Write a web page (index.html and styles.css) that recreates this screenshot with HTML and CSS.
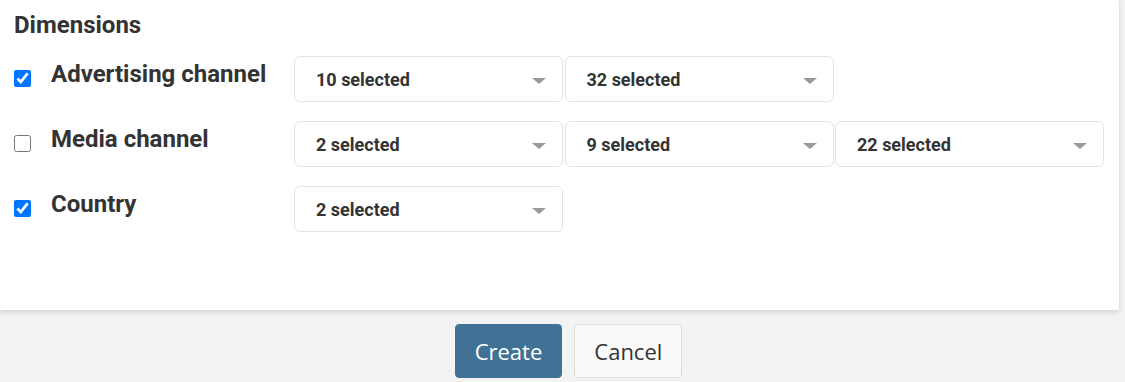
FILE: index.html
```html
<!DOCTYPE html>
<html lang="en">
<head>
<meta charset="UTF-8">
<meta name="viewport" content="width=device-width, initial-scale=1.0">
<title>Dimensions</title>
<link rel="stylesheet" href="styles.css">
</head>
<body>
<div class="panel">
  <h3 class="panel-title">Dimensions</h3>
  <div class="dim-row">
    <input type="checkbox" class="dim-check" checked>
    <label class="dim-label">Advertising channel</label>
    <div class="dim-selects">
      <div class="select-box"><span>10 selected</span><i class="caret"></i></div>
      <div class="select-box"><span>32 selected</span><i class="caret"></i></div>
    </div>
  </div>
  <div class="dim-row">
    <input type="checkbox" class="dim-check">
    <label class="dim-label">Media channel</label>
    <div class="dim-selects">
      <div class="select-box"><span>2 selected</span><i class="caret"></i></div>
      <div class="select-box"><span>9 selected</span><i class="caret"></i></div>
      <div class="select-box"><span>22 selected</span><i class="caret"></i></div>
    </div>
  </div>
  <div class="dim-row">
    <input type="checkbox" class="dim-check" checked>
    <label class="dim-label">Country</label>
    <div class="dim-selects">
      <div class="select-box"><span>2 selected</span><i class="caret"></i></div>
    </div>
  </div>
</div>
<div class="actions">
  <button class="btn btn-primary">Create</button>
  <button class="btn btn-default">Cancel</button>
</div>
</body>
</html>
```

FILE: styles.css
```css
body {
  margin: 0;
  padding: 0;
  background-color: #f3f3f3;
  font-family: Roboto, "Liberation Sans", sans-serif;
  color: #333;
}

.panel {
  width: 1119px;
  height: 310px;
  box-sizing: border-box;
  background-color: #fff;
  box-shadow: 0 2px 5px rgba(0, 0, 0, 0.15);
  padding: 11px 14px;
}

.panel-title {
  margin: 0 0 17px 0;
  font-size: 24px;
  line-height: 28px;
  font-weight: 700;
}

.dim-row {
  display: flex;
  align-items: flex-start;
  height: 46px;
  margin-bottom: 19px;
}

.dim-check {
  width: 17px;
  height: 17px;
  margin: 14px 20px 0 0;
  flex: 0 0 auto;
}

.dim-label {
  width: 243px;
  margin-top: 4px;
  font-size: 24px;
  line-height: 28px;
  font-weight: 700;
  white-space: nowrap;
}

.dim-selects {
  display: flex;
  gap: 1.5px;
}

.select-box {
  width: 269px;
  height: 46px;
  box-sizing: border-box;
  border: 1px solid #e3e3e3;
  border-radius: 6px;
  display: flex;
  align-items: center;
  justify-content: space-between;
  padding: 0 16px 0 21px;
  font-size: 18px;
  font-weight: 700;
}

.caret {
  width: 0;
  height: 0;
  border-left: 7px solid transparent;
  border-right: 7px solid transparent;
  border-top: 6px solid #999;
  margin-top: 4px;
}

.actions {
  display: flex;
  justify-content: center;
  gap: 12px;
  padding: 14px 0 0 12px;
}

.btn {
  font-family: "Open Sans", sans-serif;
  font-size: 22px;
  line-height: 28px;
  padding: 12px 19px;
  border-radius: 4px;
  cursor: pointer;
}

.btn-primary {
  background-color: #3f7294;
  border: 1px solid #3f7294;
  color: #fff;
}

.btn-default {
  background-color: #f9f9f9;
  border: 1px solid #ddd;
  color: #333;
}
```
